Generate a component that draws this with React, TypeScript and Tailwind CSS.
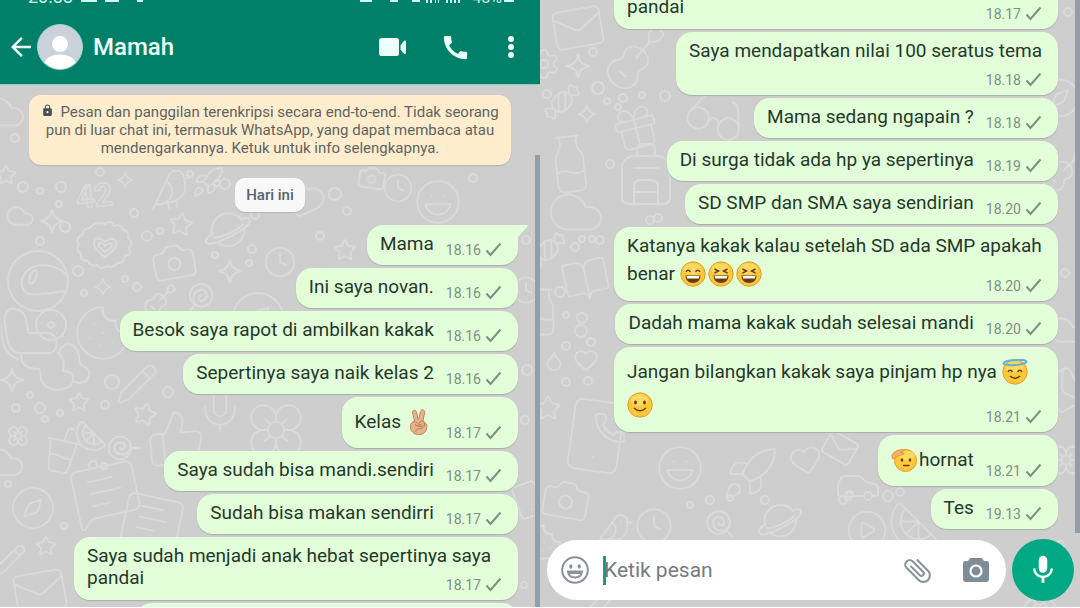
import type { ComponentType, ReactNode } from 'react'
import {
  Backpack,
  BookOpen,
  Camera,
  Candy,
  Car,
  Citrus,
  Clock,
  Cloud,
  Compass,
  Cookie,
  CupSoda,
  Droplet,
  Flower,
  Gift,
  Glasses,
  Guitar,
  Heart,
  Laugh,
  Lollipop,
  Mail,
  MessageSquareText,
  Mic,
  Milk,
  Pencil,
  Phone,
  CirclePlay,
  Rocket,
  Settings,
  Smartphone,
  Star,
  ThumbsUp,
  Bird,
} from 'lucide-react'
import { MdArrowBack, MdAttachFile, MdCall, MdLock, MdMic } from 'react-icons/md'

type EmojiName = 'victory' | 'grin' | 'laugh' | 'angel' | 'smile' | 'salute'

interface Line {
  text?: string
  emojis?: EmojiName[]
  emojiFirst?: boolean
}

interface Message {
  lines: Line[]
  time: string
  // inline: time sits beside the text; overlap: beside the last line; below: on its own row
  layout?: 'inline' | 'overlap' | 'below'
  wide?: boolean
  tail?: boolean
}

const PANDAI: Message = {
  lines: [{ text: 'Saya sudah menjadi anak hebat sepertinya saya' }, { text: 'pandai' }],
  time: '18.17',
  layout: 'overlap',
  wide: true,
}

const NILAI: Message = {
  lines: [{ text: 'Saya mendapatkan nilai 100 seratus tema' }],
  time: '18.18',
  layout: 'below',
}

const FIRST_MESSAGES: Message[] = [
  { lines: [{ text: 'Mama' }], time: '18.16', tail: true },
  { lines: [{ text: 'Ini saya novan.' }], time: '18.16' },
  { lines: [{ text: 'Besok saya rapot di ambilkan kakak' }], time: '18.16' },
  { lines: [{ text: 'Sepertinya saya naik kelas 2' }], time: '18.16' },
  { lines: [{ text: 'Kelas ', emojis: ['victory'] }], time: '18.17' },
  { lines: [{ text: 'Saya sudah bisa mandi.sendiri' }], time: '18.17' },
  { lines: [{ text: 'Sudah bisa makan sendirri' }], time: '18.17' },
  PANDAI,
  NILAI,
]

const LAST_MESSAGES: Message[] = [
  PANDAI,
  NILAI,
  { lines: [{ text: 'Mama sedang ngapain ?' }], time: '18.18' },
  { lines: [{ text: 'Di surga tidak ada hp ya sepertinya' }], time: '18.19' },
  { lines: [{ text: 'SD SMP dan SMA saya sendirian' }], time: '18.20' },
  {
    lines: [
      { text: 'Katanya kakak kalau setelah SD ada SMP apakah' },
      { text: 'benar ', emojis: ['grin', 'laugh', 'laugh'] },
    ],
    time: '18.20',
    layout: 'overlap',
    wide: true,
  },
  { lines: [{ text: 'Dadah mama kakak sudah selesai mandi' }], time: '18.20' },
  {
    lines: [{ text: 'Jangan bilangkan kakak saya pinjam hp nya ', emojis: ['angel'] }, { emojis: ['smile'] }],
    time: '18.21',
    layout: 'overlap',
    wide: true,
  },
  { lines: [{ text: 'hornat', emojis: ['salute'], emojiFirst: true }], time: '18.21' },
  { lines: [{ text: 'Tes' }], time: '19.13' },
]

/* ---------- Wallpaper ---------- */

type DoodleProps = { size?: number | string; strokeWidth?: number | string; x?: number; y?: number }

function Sparkle({ size = 24, x = 0, y = 0 }: DoodleProps) {
  return (
    <svg x={x} y={y} width={size} height={size} viewBox="0 0 24 24" fill="none" stroke="currentColor" strokeWidth="2">
      <path d="M12 1c1 7 4 10 11 11-7 1-10 4-11 11-1-7-4-10-11-11 7-1 10-4 11-11z" />
    </svg>
  )
}

function Planet({ size = 24, x = 0, y = 0 }: DoodleProps) {
  return (
    <svg x={x} y={y} width={size} height={size} viewBox="0 0 48 48" fill="none" stroke="currentColor" strokeWidth="2">
      <path d="M9 27a16 16 0 0 1 28-14M40 22a16 16 0 0 1-26 13" />
      <path d="M10 26c-8 5-9 9-5 10 7 2 41-15 40-22 0-4-5-3-9-1M10 30c8 1 24-7 29-13" />
    </svg>
  )
}

function Badge({ size = 24, x = 0, y = 0 }: DoodleProps) {
  return (
    <svg x={x} y={y} width={size} height={size} viewBox="0 0 60 54" fill="none" stroke="currentColor" strokeWidth="2">
      <path d="M30 4q6-5 9 2 7-3 9 4 7 1 5 8 6 4 1 10 3 7-4 8-1 8-8 7-4 6-10 3-6 5-10-1-7 2-9-4-8 0-7-7-6-4-2-9-4-7 3-10 1-7 8-7 5-7 15-4z" />
      <path d="M30 37C20 30 17 24 20 20q5-4 10 2 7-6 11-1c2 5-2 10-11 16z" />
      <path d="M30 32c-6-4-7-7-6-9q3-1 6 3 4-4 7-2c0 2-1 4-7 8z" />
    </svg>
  )
}

function Helmet({ size = 24, x = 0, y = 0 }: DoodleProps) {
  return (
    <svg x={x} y={y} width={size} height={size} viewBox="0 0 64 64" fill="none" stroke="currentColor" strokeWidth="2">
      <circle cx="32" cy="32" r="30" />
      <path d="M60 42c-14 2-26 4-36 3-9-2-10-12-6-19 5-9 16-11 26-9 7 1 14 5 17 10" />
      <ellipse cx="27" cy="28" rx="3" ry="7" transform="rotate(20 27 28)" />
    </svg>
  )
}

function Bear({ size = 24, x = 0, y = 0 }: DoodleProps) {
  return (
    <svg x={x} y={y} width={size} height={size} viewBox="0 0 90 90" fill="none" stroke="currentColor" strokeWidth="2">
      <path d="M14 4C6 2 2 10 4 20c2 12 2 26 14 28h32c8-2 8-20-4-20H28c-4-2 2-22-14-24z" />
      <path d="M20 50c0 12 10 14 18 14 2 0 1 6 2 10 3 14 30 14 32 2 1-8-4-10-10-10 2-8 0-16-6-18" />
      <path d="M58 48c4-12 16-12 20 2 1 6-2 8 6 12 8 5 4 16-6 16l-7-2M0 20c0 24 8 32 18 34" />
      <circle cx="50" cy="20" r="15" />
      <circle cx="50" cy="20" r="3" />
      <path d="M44 10h1M55 10h1M40 18h1M60 18h1M44 28h1M55 28h1" />
    </svg>
  )
}

interface Doodle {
  icon: ComponentType<DoodleProps>
  cx: number
  cy: number
  size: number
  rotate?: number
}

const LEFT_DOODLES: Doodle[] = [
  { icon: Cloud, cx: 4, cy: 112, size: 46 },
  { icon: Star, cx: 6, cy: 175, size: 22 },
  { icon: Sparkle, cx: 125, cy: 180, size: 18 },
  { icon: Bird, cx: 170, cy: 190, size: 48, rotate: -10 },
  { icon: Rocket, cx: 208, cy: 182, size: 34 },
  { icon: Heart, cx: 304, cy: 200, size: 44, rotate: 20 },
  { icon: Camera, cx: 372, cy: 178, size: 30, rotate: 8 },
  { icon: Clock, cx: 398, cy: 188, size: 32 },
  { icon: Laugh, cx: 438, cy: 202, size: 50 },
  { icon: Cloud, cx: 20, cy: 216, size: 30 },
  { icon: Sparkle, cx: 52, cy: 221, size: 26 },
  { icon: Badge, cx: 105, cy: 247, size: 60 },
  { icon: Star, cx: 181, cy: 224, size: 26, rotate: 8 },
  { icon: Planet, cx: 228, cy: 231, size: 50 },
  { icon: Camera, cx: 174, cy: 262, size: 48, rotate: -10 },
  { icon: Sparkle, cx: 230, cy: 271, size: 26 },
  { icon: Clock, cx: 280, cy: 262, size: 34 },
  { icon: Sparkle, cx: 103, cy: 287, size: 18 },
  { icon: Helmet, cx: 38, cy: 281, size: 64 },
  { icon: Bear, cx: 46, cy: 350, size: 90 },
  { icon: Cookie, cx: 103, cy: 333, size: 62 },
  { icon: Guitar, cx: 160, cy: 300, size: 36 },
  { icon: Lollipop, cx: 200, cy: 297, size: 34, rotate: 80 },
  { icon: Compass, cx: 258, cy: 318, size: 60 },
  { icon: Star, cx: 345, cy: 250, size: 24 },
  { icon: Pencil, cx: 137, cy: 384, size: 44 },
  { icon: Sparkle, cx: 12, cy: 380, size: 26 },
  { icon: Star, cx: 79, cy: 402, size: 22 },
  { icon: Star, cx: 145, cy: 414, size: 26, rotate: 15 },
  { icon: Mic, cx: 220, cy: 410, size: 50 },
  { icon: ThumbsUp, cx: 176, cy: 438, size: 62, rotate: -5 },
  { icon: Flower, cx: 276, cy: 430, size: 66 },
  { icon: CupSoda, cx: 62, cy: 450, size: 54, rotate: 12 },
  { icon: Citrus, cx: 91, cy: 436, size: 34 },
  { icon: Lollipop, cx: 122, cy: 448, size: 34, rotate: -45 },
  { icon: Flower, cx: 18, cy: 436, size: 24 },
  { icon: Cloud, cx: 4, cy: 462, size: 44 },
  { icon: Compass, cx: 33, cy: 508, size: 48 },
  { icon: MessageSquareText, cx: 106, cy: 494, size: 74, rotate: -12 },
  { icon: MessageSquareText, cx: 152, cy: 522, size: 66, rotate: 12 },
  { icon: Star, cx: 46, cy: 546, size: 22 },
  { icon: Pencil, cx: 10, cy: 560, size: 34 },
  { icon: Mail, cx: 40, cy: 592, size: 58, rotate: -10 },
  { icon: Clock, cx: 526, cy: 290, size: 30 },
  { icon: Smartphone, cx: 528, cy: 500, size: 40, rotate: -20 },
]

const RIGHT_DOODLES: Doodle[] = [
  { icon: Mail, cx: 38, cy: 28, size: 56, rotate: -10 },
  { icon: Settings, cx: 4, cy: 64, size: 34 },
  { icon: Sparkle, cx: 38, cy: 66, size: 26 },
  { icon: Guitar, cx: 96, cy: 58, size: 70, rotate: -5 },
  { icon: Candy, cx: 22, cy: 102, size: 40 },
  { icon: Sparkle, cx: 47, cy: 114, size: 20 },
  { icon: Glasses, cx: 176, cy: 116, size: 64, rotate: 20 },
  { icon: Gift, cx: 96, cy: 128, size: 52, rotate: -14 },
  { icon: Milk, cx: 30, cy: 164, size: 66, rotate: -6 },
  { icon: Backpack, cx: 106, cy: 174, size: 72 },
  { icon: Cloud, cx: 36, cy: 212, size: 60 },
  { icon: Candy, cx: 8, cy: 250, size: 40 },
  { icon: BookOpen, cx: 46, cy: 280, size: 50, rotate: -12 },
  { icon: Milk, cx: 2, cy: 312, size: 54 },
  { icon: Heart, cx: 46, cy: 360, size: 26 },
  { icon: Droplet, cx: 14, cy: 361, size: 22 },
  { icon: Smartphone, cx: 56, cy: 436, size: 84, rotate: 8 },
  { icon: Phone, cx: 70, cy: 428, size: 34 },
  { icon: Star, cx: 8, cy: 408, size: 28 },
  { icon: Laugh, cx: 140, cy: 468, size: 50 },
  { icon: Rocket, cx: 210, cy: 474, size: 60 },
  { icon: Heart, cx: 266, cy: 460, size: 34, rotate: -12 },
  { icon: Mail, cx: 300, cy: 448, size: 36, rotate: 30 },
  { icon: Car, cx: 318, cy: 486, size: 48 },
  { icon: CirclePlay, cx: 327, cy: 530, size: 44 },
  { icon: Citrus, cx: 374, cy: 526, size: 54 },
  { icon: Bird, cx: 74, cy: 530, size: 40 },
  { icon: Clock, cx: 114, cy: 526, size: 40 },
  { icon: Camera, cx: 26, cy: 500, size: 52, rotate: 10 },
  { icon: Cookie, cx: 4, cy: 542, size: 40 },
  { icon: Lollipop, cx: 180, cy: 524, size: 34 },
  { icon: Planet, cx: 240, cy: 522, size: 48 },
  { icon: Compass, cx: 520, cy: 98, size: 44 },
  { icon: Guitar, cx: 524, cy: 170, size: 50 },
  { icon: Cloud, cx: 526, cy: 330, size: 40 },
  { icon: Mail, cx: 524, cy: 390, size: 44, rotate: 60 },
  { icon: Flower, cx: 526, cy: 460, size: 36 },
  { icon: Flower, cx: 500, cy: 600, size: 40 },
  { icon: Pencil, cx: 60, cy: 604, size: 40 },
]

const LEFT_DOTS = [
  [23, 187, 5], [61, 187, 5], [40, 191, 3], [59, 204, 3], [134, 213, 4], [65, 227, 5], [147, 236, 5],
  [160, 231, 3], [40, 241, 4], [252, 249, 4], [215, 255, 3], [78, 271, 5], [125, 279, 3], [137, 287, 4],
  [84, 293, 3], [249, 263, 3], [112, 382, 7], [168, 392, 5], [105, 405, 4], [40, 408, 5], [16, 408, 4],
  [60, 413, 3], [30, 395, 3], [45, 419, 3], [93, 465, 4], [104, 466, 3], [8, 484, 3], [64, 526, 3],
  [217, 183, 3], [225, 184, 5], [335, 194, 6], [347, 211, 4], [190, 174, 3], [255, 215, 4], [473, 178, 4],
  [525, 420, 4], [527, 370, 5], [524, 585, 3], [15, 138, 4], [526, 240, 4], [320, 236, 4], [100, 172, 4],
]

const RIGHT_DOTS = [
  [53, 52, 4], [58, 88, 6], [7, 94, 4], [67, 101, 3], [83, 98, 4], [102, 95, 3], [125, 96, 5], [78, 107, 3],
  [70, 164, 4], [110, 220, 4], [118, 218, 4], [35, 247, 4], [42, 239, 3], [52, 239, 3], [60, 240, 4],
  [20, 292, 5], [26, 315, 3], [42, 318, 5], [41, 331, 6], [51, 342, 4], [26, 346, 4], [26, 382, 4],
  [48, 381, 4], [303, 500, 4], [310, 494, 3], [348, 496, 5], [360, 492, 4], [528, 12, 4], [525, 273, 4],
  [170, 500, 4], [190, 498, 3], [520, 545, 4], [150, 505, 3], [225, 500, 4],
]

function Wallpaper({ doodles, dots, children }: { doodles: Doodle[]; dots: number[][]; children?: ReactNode }) {
  return (
    <svg aria-hidden="true" className="absolute inset-0 w-full h-full text-[#dadada]" fill="none" stroke="currentColor">
      {doodles.map(({ icon: Icon, cx, cy, size, rotate = 0 }, i) => (
        <g key={i} transform={`rotate(${rotate} ${cx} ${cy})`}>
          <Icon x={cx - size / 2} y={cy - size / 2} size={size} strokeWidth={44 / size} />
        </g>
      ))}
      {dots.map(([cx, cy, r], i) => (
        <circle key={i} cx={cx} cy={cy} r={r} strokeWidth="2" />
      ))}
      {children}
    </svg>
  )
}

/* ---------- Emoji ---------- */

function FaceBase() {
  return (
    <>
      <circle cx="13" cy="13" r="12.2" fill="#fbc938" stroke="#e79a2b" strokeWidth="1" />
      <ellipse cx="12.5" cy="8" rx="9" ry="6" fill="#ffe070" opacity="0.7" />
    </>
  )
}

function OpenMouth() {
  return (
    <>
      <path d="M5.5 14.5h15c0 4.6-3 7.5-7.5 7.5s-7.5-2.9-7.5-7.5z" fill="#6b3a1c" />
      <path d="M6.5 15h13l-.6 2.4H7.1z" fill="#fff" />
    </>
  )
}

const EMOJI_ART: Record<EmojiName, { label: string; art: ReactNode }> = {
  grin: {
    label: '😄',
    art: (
      <>
        <FaceBase />
        <path d="M6 11q2-3.5 4.5 0M15.5 11q2.5-3.5 4.5 0" fill="none" stroke="#6b3a1c" strokeWidth="1.5" />
        <OpenMouth />
      </>
    ),
  },
  laugh: {
    label: '😆',
    art: (
      <>
        <FaceBase />
        <path d="M6.5 8l4 2-4 2M19.5 8l-4 2 4 2" fill="none" stroke="#6b3a1c" strokeWidth="1.4" />
        <OpenMouth />
      </>
    ),
  },
  angel: {
    label: '😇',
    art: (
      <>
        <FaceBase />
        <ellipse cx="13" cy="3.5" rx="11.5" ry="2.5" fill="none" stroke="#62b4cf" strokeWidth="2" transform="rotate(-4 13 4)" />
        <path d="M6 13q2-3.5 4.5 0M15.5 13q2.5-3.5 4.5 0" fill="none" stroke="#6b3a1c" strokeWidth="1.5" />
        <path d="M8 17q5 4.5 10 0" fill="none" stroke="#6b3a1c" strokeWidth="1.5" />
      </>
    ),
  },
  smile: {
    label: '🙂',
    art: (
      <>
        <FaceBase />
        <ellipse cx="8.500" cy="10.500" rx="1.400" ry="2" fill="#6b3a1c" />
        <ellipse cx="17.500" cy="10.500" rx="1.400" ry="2" fill="#6b3a1c" />
        <path d="M7 16q6 5.5 12 0" fill="none" stroke="#6b3a1c" strokeWidth="1.5" />
      </>
    ),
  },
  salute: {
    label: '🫡',
    art: (
      <>
        <circle cx="14.500" cy="13.500" r="11" fill="#fbc938" stroke="#e79a2b" />
        <ellipse cx="16" cy="8.500" rx="8" ry="4.500" fill="#ffe070" opacity="0.7" />
        <ellipse cx="11" cy="13" rx="1.300" ry="1.700" fill="#6b3a1c" />
        <ellipse cx="19" cy="13" rx="1.300" ry="1.700" fill="#6b3a1c" />
        <path d="M12 18.500h6.500" stroke="#6b3a1c" strokeWidth="1.500" />
        <path
          d="M.8 8C2.500 4.500 7.500 2.500 11.500 2.600c1.500.2 1.500 1.600.2 2L9 5.400l3 .4c1.200.4 1 1.600 0 1.800C9.500 8 6.500 8.500 5 10.500L1.500 12z"
          fill="#f6b25c"
          stroke="#dd8838"
          strokeWidth=".7"
        />
      </>
    ),
  },
  victory: {
    label: '✌🏼',
    art: (
      <g fill="#e6b48c" stroke="#b97c54" strokeWidth="0.9">
        <path d="M7.500 1.500c1.400-.6 2.700.2 3 1.600l1.400 7h.8l1.700-7.500c.4-1.500 1.600-2 2.900-1.600 1.200.4 1.600 1.500 1.300 2.800L17 12l3.500 3c1 4-.5 10-6.500 10.500-5 .5-8.500-2-9.500-6.500-.7-3 .5-5.500 4-7L6.600 4c-.3-1.200 0-2.100.9-2.500z" />
        <path d="M13 14.500c1-3 4.500-3.200 5.200-.5l.5 3.500M5.500 15c1-2.500 4.500-3 6-.8 1 1.700 4.500 1.200 5.500 2.600.9 1.500-.8 3-3 2.900-2.500-.1-4 .3-4.500 3.300" />
        <path d="M9 15.500c2.500 2 4.500 1 6.500 2.300" fill="none" stroke="#a15a3c" />
      </g>
    ),
  },
}

function Emoji({ name }: { name: EmojiName }) {
  const { label, art } = EMOJI_ART[name]
  return (
    <svg role="img" aria-label={label} viewBox="0 0 26 26" className="w-[26px] h-[26px] mr-0.5 shrink-0">
      {art}
    </svg>
  )
}

/* ---------- Messages ---------- */

function TimeStamp({ time }: { time: string }) {
  return (
    <span className="flex items-center gap-1 h-[18px] text-sm text-[#7b9080] shrink-0">
      <time>{time}</time>
      <svg viewBox="0 0 17 16" className="w-[17px] h-4" fill="none" stroke="currentColor" strokeWidth="2" aria-label="Terkirim">
        <path d="M1.500 8.500l4 4.500L15.500 1.500" />
      </svg>
    </span>
  )
}

function MessageLine({ line }: { line: Line }) {
  const emojis = line.emojis?.map((name, i) => <Emoji key={i} name={name} />)
  return (
    <span className={`flex items-center whitespace-pre ${emojis ? 'h-[33px]' : 'h-[22px]'}`}>
      {line.emojiFirst && emojis}
      {line.text}
      {!line.emojiFirst && emojis}
    </span>
  )
}

const TIME_OFFSET = {
  inline: '',
  overlap: '-mt-[13px]',
  below: 'mt-[9px]',
}

function Bubble({ message }: { message: Message }) {
  const { lines, time, layout = 'inline', wide, tail } = message
  const inline = layout === 'inline'
  return (
    <li
      className={`relative flex shrink-0 rounded-2xl bg-[#e3ffd9] pt-2 pb-1.5 pl-[13px] pr-4 shadow-[0_1px_1px_#a9b0a8] ${
        inline ? 'items-end gap-3' : 'flex-col'
      } ${wide ? 'w-[444px]' : ''}`}
    >
      <p className={`text-[19px] leading-[22px] text-[#24382b] ${inline ? 'mb-1' : ''}`}>
        {lines.map((line, i) => (
          <MessageLine key={i} line={line} />
        ))}
      </p>
      <div className={`flex justify-end ${TIME_OFFSET[layout]}`}>
        <TimeStamp time={time} />
      </div>
      {tail && (
        <svg viewBox="0 0 26 16" className="absolute top-0 -right-2.5 w-[26px] h-4" aria-hidden="true">
          <path d="M0 0h24c2 0 2 1 1 2l-9 10v4z" fill="#e3ffd9" />
        </svg>
      )}
    </li>
  )
}

function MessageList({ messages }: { messages: Message[] }) {
  return (
    <ol className="flex flex-col items-end gap-[3px] pr-[22px]">
      {messages.map((message, i) => (
        <Bubble key={i} message={message} />
      ))}
    </ol>
  )
}

/* ---------- Header ---------- */

function StatusBar() {
  return (
    <div className="flex h-1 items-end justify-between overflow-hidden pl-7 pr-[26px] text-base leading-none text-[#cdfbf0]">
      <div className="flex items-end gap-2">
        <span className="-mb-0.5 text-lg leading-none">20.33</span>
        <span className="h-0.5 w-4 mb-0.5 bg-current" />
        <span className="h-0.5 w-3.5 mb-0.5 bg-current" />
        <span className="h-0.5 w-1.5 mb-0.5 ml-2.5 bg-current" />
      </div>
      <div className="flex items-end gap-1.5">
        <span className="h-0.5 w-3 mb-0.5 mr-3 bg-current" />
        <span className="h-0.5 w-2 mb-0.5 mr-2 bg-current" />
        <span className="h-0.5 w-2 mb-0.5 bg-current" />
        <svg viewBox="0 0 34 3" className="w-[34px] h-[3px] mb-px" fill="currentColor" aria-hidden="true">
          <path d="M0 0h2v3H0zM4 0h2v3H4zM9 0h1v3H9zM12 0h1v3h-1zM20 0h2v3h-2zM24 0h2v3h-2zM28 0h2v3h-2zM32 0h2v3h-2z" />
        </svg>
        <span className="-mb-0.5 ml-1.5 leading-none">48%</span>
        <span className="h-0.5 w-2.5 mb-0.5 -ml-1 bg-current" />
      </div>
    </div>
  )
}

function ChatHeader() {
  return (
    <header className="relative bg-[#008069] text-[#eefffa] border-b border-[#8fcdc1]">
      <StatusBar />
      <div className="flex items-center pt-5 pb-3.5 pl-1.5 pr-[25px]">
        <button type="button" aria-label="Kembali">
          <MdArrowBack size={30} />
        </button>
        <svg viewBox="0 0 46 46" className="w-[46px] h-[46px] ml-px shrink-0" role="img" aria-label="Foto profil">
          <defs>
            <clipPath id="avatar">
              <circle cx="23" cy="23" r="22" />
            </clipPath>
          </defs>
          <circle cx="23" cy="23" r="22.500" fill="#cbd2da" stroke="#9fd6cb" />
          <g fill="#fff" clipPath="url(#avatar)">
            <circle cx="23" cy="20" r="8" />
            <ellipse cx="23" cy="41" rx="16" ry="10.500" />
          </g>
        </svg>
        <h1 className="ml-2.5 flex-1 text-2xl leading-7 font-medium">Mamah</h1>
        <button type="button" aria-label="Panggilan video">
          <svg viewBox="0 0 28 20" className="w-7 h-5" fill="currentColor">
            <rect x="0" y="1" width="20" height="18" rx="2.500" />
            <path d="M21.500 8.500v4l3.500 4.300q2 1 2-1v-11q0-2-2-1z" />
          </svg>
        </button>
        <button type="button" aria-label="Panggilan suara" className="ml-[33px]">
          <MdCall size={31} />
        </button>
        <button type="button" aria-label="Opsi lainnya" className="ml-9">
          <svg viewBox="0 0 8 24" className="w-2 h-6" fill="currentColor">
            <circle cx="4" cy="4" r="3" />
            <circle cx="4" cy="12" r="3" />
            <circle cx="4" cy="20" r="3" />
          </svg>
        </button>
      </div>
    </header>
  )
}

/* ---------- Composer ---------- */

function Composer() {
  return (
    <form className="relative flex items-center gap-1.5 pl-[7px] pr-1.5 pb-1.5" onSubmit={e => e.preventDefault()}>
      <div className="flex flex-1 items-center h-[60px] pl-3.5 pr-4 rounded-full bg-white">
        <button type="button" aria-label="Emoji" className="text-[#87929a]">
          <svg viewBox="0 0 28 28" className="w-7 h-7" fill="none" stroke="currentColor" strokeWidth="2">
            <circle cx="14" cy="14" r="12.800" />
            <ellipse cx="9.800" cy="10.500" rx="1.600" ry="2.200" fill="currentColor" stroke="none" />
            <ellipse cx="18.200" cy="10.500" rx="1.600" ry="2.200" fill="currentColor" stroke="none" />
            <path d="M7 15.500h14c-.5 4-3.500 6-7 6s-6.500-2-7-6z" />
            <path d="M8 16h12v2H8z" fill="currentColor" stroke="none" />
          </svg>
        </button>
        <span className="ml-3.5 w-[3px] h-[29px] bg-[#1d9d80]" aria-hidden="true" />
        <input
          type="text"
          aria-label="Ketik pesan"
          placeholder="Ketik pesan"
          className="flex-1 min-w-0 -ml-0.5 text-[21px] leading-7 text-[#1c2f23] placeholder:text-[#757b7f] outline-none"
        />
        <button type="button" aria-label="Lampirkan" className="text-[#87929a]">
          <MdAttachFile size={33} className="-rotate-45" />
        </button>
        <button type="button" aria-label="Kamera" className="ml-7 text-[#7d8d99]">
          <svg viewBox="0 0 28 26" className="w-7 h-[26px]">
            <path
              d="M9 1h10q1 0 1.500 1L22 4h2.500Q27 4 27 7v15q0 3-3 3H4q-3 0-3-3V7q0-3 2.500-3H6l1.500-2Q8 1 9 1z"
              fill="currentColor"
            />
            <circle cx="14" cy="14" r="5.500" fill="none" stroke="#fff" strokeWidth="2.200" />
          </svg>
        </button>
      </div>
      <button
        type="button"
        aria-label="Pesan suara"
        className="flex items-center justify-center w-[62px] h-[62px] rounded-full bg-[#00a884] text-white shrink-0"
      >
        <MdMic size={34} />
      </button>
    </form>
  )
}

export default function App() {
  return (
    <main className="flex h-screen overflow-hidden border-b border-white bg-[#cecece] font-[Roboto,sans-serif]">
      <section className="relative flex flex-1 min-w-0 flex-col overflow-hidden">
        <Wallpaper doodles={LEFT_DOODLES} dots={LEFT_DOTS}>
          <text x="76" y="207" fontSize="32" fontWeight="700" strokeWidth="1.500" transform="rotate(-6 93 195)">
            42
          </text>
        </Wallpaper>
        <ChatHeader />
        <div className="relative flex flex-col gap-[13px] pt-2.5">
          <p className="mx-[29px] rounded-xl bg-[#ffedcd] px-2 py-2 text-center text-[15px] leading-[18px] text-[#5d6461] shadow-[0_1px_1px_#b5b3ae]">
            <MdLock size={13} className="inline mr-1.5 align-baseline text-[#46525a]" />
            Pesan dan panggilan terenkripsi secara end-to-end. Tidak seorang
            <br />
            pun di luar chat ini, termasuk WhatsApp, yang dapat membaca atau
            <br />
            mendengarkannya. Ketuk untuk info selengkapnya.
          </p>
          <p className="self-center rounded-[10px] bg-[#f8f8f9] px-[11px] py-2 text-[15px] leading-[18px] font-medium text-[#54626f] shadow-[0_1px_1px_#b5b3ae]">
            Hari ini
          </p>
          <MessageList messages={FIRST_MESSAGES} />
        </div>
        <div className="absolute right-0 top-[155px] bottom-0 w-[5px] bg-[#929ea8]" />
      </section>

      <section className="relative flex flex-1 min-w-0 flex-col overflow-hidden">
        <Wallpaper doodles={RIGHT_DOODLES} dots={RIGHT_DOTS} />
        <div className="relative flex flex-1 min-h-0 flex-col justify-end pb-2.5">
          <MessageList messages={LAST_MESSAGES} />
          <div className="absolute right-0 top-0 bottom-1.5 w-[5px] bg-[#929ea8]" />
        </div>
        <Composer />
      </section>
    </main>
  )
}
